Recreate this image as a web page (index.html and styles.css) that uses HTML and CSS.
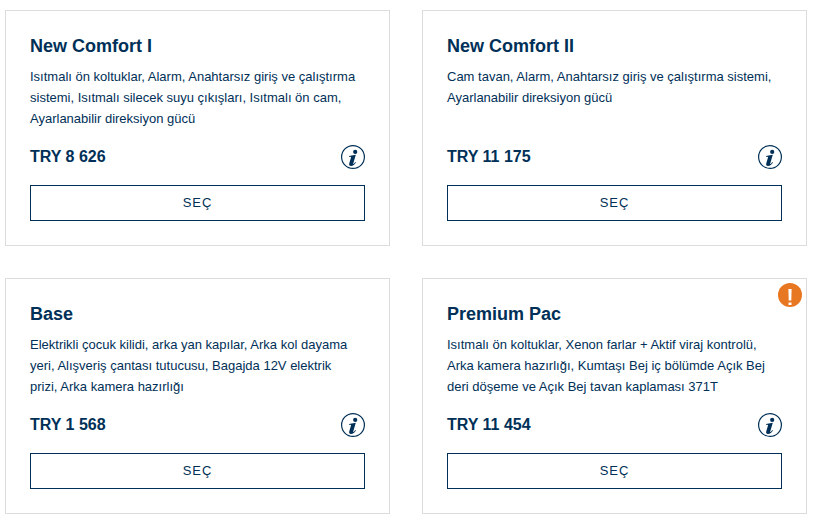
FILE: index.html
```
<!DOCTYPE html>
<html lang="tr">
<head>
    <meta charset="UTF-8">
    <meta name="viewport" content="width=device-width, initial-scale=1.0">
    <title>Paketler</title>
    <link rel="stylesheet" href="styles.css">
</head>
<body>
<svg class="symbols" aria-hidden="true">
    <symbol id="info" viewBox="0 0 24 24">
        <circle cx="12" cy="12" r="11.4" fill="none" stroke="currentColor" stroke-width="1.2"/>
        <circle cx="14.2" cy="6.9" r="2.1" fill="currentColor"/>
        <path d="M8 11 L14.8 9.8 L12.3 18.2 C12 19.2 12.5 19.2 13 18.7 L14.3 17 L14.9 17.4 C13.6 19.5 12 21 10 21 C8.3 21 7.8 19.8 8.3 18.2 L10 12.5 C10.2 11.8 9.6 11.7 8 11.8 Z" fill="currentColor"/>
    </symbol>
</svg>

<main class="packages">
    <article class="package">
        <h2 class="package-title">New Comfort I</h2>
        <p class="package-text">Isıtmalı ön koltuklar, Alarm, Anahtarsız giriş ve çalıştırma sistemi, Isıtmalı silecek suyu çıkışları, Isıtmalı ön cam, Ayarlanabilir direksiyon gücü</p>
        <div class="package-row">
            <span class="package-price">TRY 8 626</span>
            <button type="button" class="info-button" aria-label="Bilgi"><svg><use href="#info"/></svg></button>
        </div>
        <button type="button" class="select-button">SEÇ</button>
    </article>

    <article class="package">
        <h2 class="package-title">New Comfort II</h2>
        <p class="package-text">Cam tavan, Alarm, Anahtarsız giriş ve çalıştırma sistemi, Ayarlanabilir direksiyon gücü</p>
        <div class="package-row">
            <span class="package-price">TRY 11 175</span>
            <button type="button" class="info-button" aria-label="Bilgi"><svg><use href="#info"/></svg></button>
        </div>
        <button type="button" class="select-button">SEÇ</button>
    </article>

    <article class="package">
        <h2 class="package-title">Base</h2>
        <p class="package-text">Elektrikli çocuk kilidi, arka yan kapılar, Arka kol dayama yeri, Alışveriş çantası tutucusu, Bagajda 12V elektrik prizi, Arka kamera hazırlığı</p>
        <div class="package-row">
            <span class="package-price">TRY 1 568</span>
            <button type="button" class="info-button" aria-label="Bilgi"><svg><use href="#info"/></svg></button>
        </div>
        <button type="button" class="select-button">SEÇ</button>
    </article>

    <article class="package">
        <svg class="package-alert" viewBox="0 0 24 24" role="img" aria-label="Uyarı">
            <circle cx="12" cy="12" r="12" fill="#e87722"/>
            <path d="M10.4 6h3.2l-.3 11.6h-2.6z M10.5 19.4h3v2.6h-3z" fill="#fff"/>
        </svg>
        <h2 class="package-title">Premium Pac</h2>
        <p class="package-text">Isıtmalı ön koltuklar, Xenon farlar + Aktif viraj kontrolü, Arka kamera hazırlığı, Kumtaşı Bej iç bölümde Açık Bej deri döşeme ve Açık Bej tavan kaplaması 371T</p>
        <div class="package-row">
            <span class="package-price">TRY 11 454</span>
            <button type="button" class="info-button" aria-label="Bilgi"><svg><use href="#info"/></svg></button>
        </div>
        <button type="button" class="select-button">SEÇ</button>
    </article>
</main>
</body>
</html>
```
FILE: styles.css
```
* {
    box-sizing: border-box;
}

body {
    margin: 0;
    background-color: #fff;
    color: #003057;
    font-family: "Liberation Sans", Arial, sans-serif;
    font-size: 13px;
}

.symbols {
    position: absolute;
    width: 0;
    height: 0;
}

.packages {
    display: grid;
    grid-template-columns: 1fr 1fr;
    gap: 32px;
    padding: 10px 8px 7px 5px;
}

.package {
    position: relative;
    display: flex;
    flex-direction: column;
    padding: 24px;
    border: 1px solid #dcdcdc;
}

.package-title {
    margin: 0 0 9px;
    font-size: 18px;
    line-height: 22px;
}

.package-text {
    margin: 0 0 16px;
    padding-right: 8px;
    line-height: 21px;
}

.package-row {
    display: flex;
    align-items: center;
    justify-content: space-between;
    margin-top: auto;
    margin-bottom: 16px;
}

.package-price {
    font-size: 16px;
    font-weight: bold;
    line-height: 24px;
}

.info-button {
    width: 24px;
    height: 24px;
    padding: 0;
    border: none;
    background: none;
    color: inherit;
    cursor: pointer;
}

.info-button svg {
    display: block;
    width: 24px;
    height: 24px;
}

.select-button {
    height: 36px;
    padding: 0 6px 2px;
    border: 1px solid #003057;
    background-color: #fff;
    color: inherit;
    font-family: inherit;
    font-size: 13px;
    letter-spacing: 1px;
    cursor: pointer;
}

.package-alert {
    position: absolute;
    top: 4px;
    right: 4px;
    width: 24px;
    height: 24px;
}
```
